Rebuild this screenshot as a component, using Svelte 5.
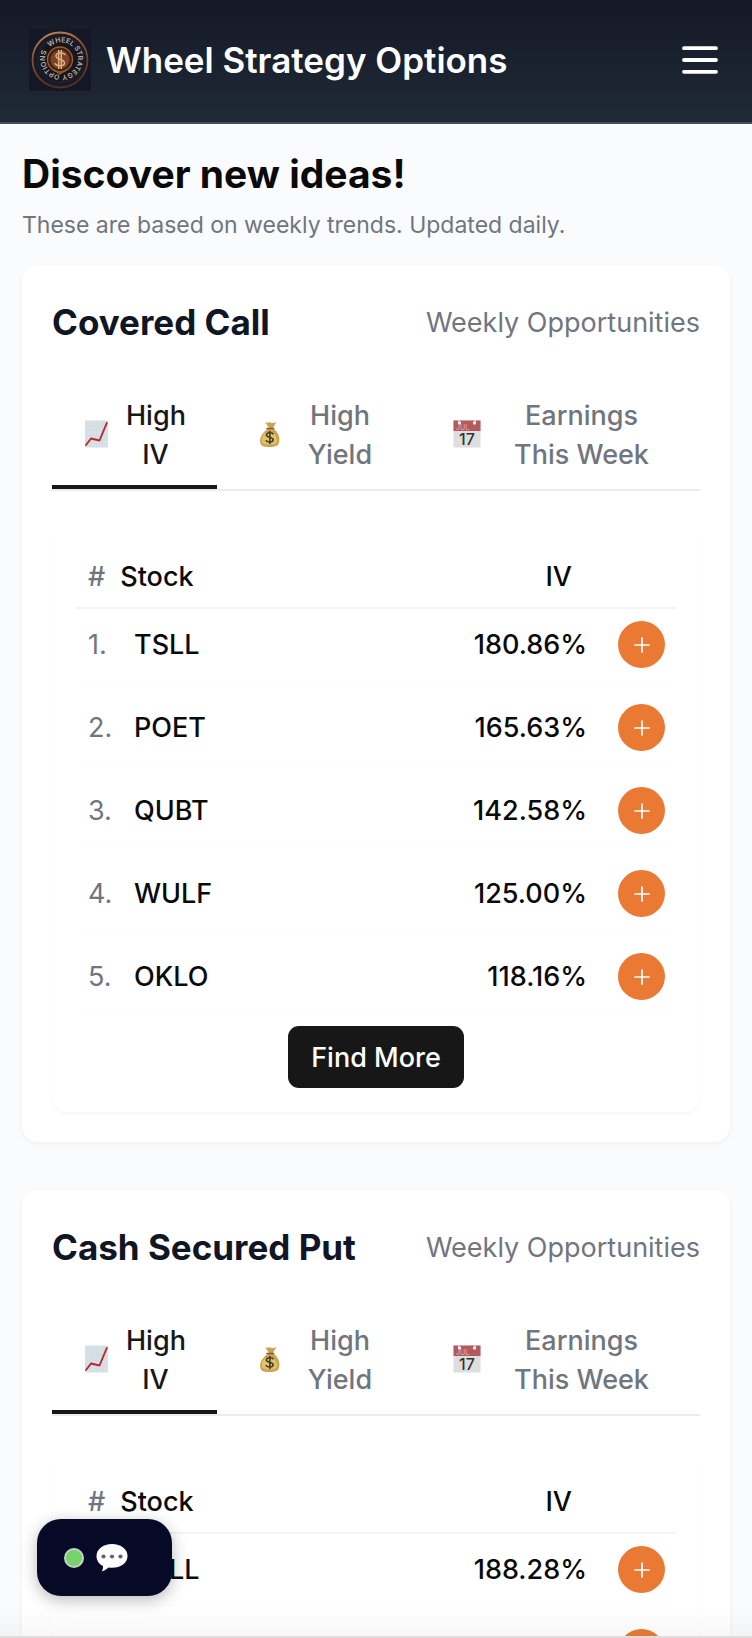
<script>
  const tabs = [
    { icon: 'chart', label: 'High IV' },
    { icon: 'bag', label: 'High Yield' },
    { icon: 'calendar', label: 'Earnings This Week' }
  ];

  const sections = [
    {
      title: 'Covered Call',
      rows: [
        ['TSLL', '180.86%'],
        ['POET', '165.63%'],
        ['QUBT', '142.58%'],
        ['WULF', '125.00%'],
        ['OKLO', '118.16%']
      ]
    },
    {
      title: 'Cash Secured Put',
      rows: [
        ['TSLL', '188.28%'],
        ['POET', '165.63%']
      ]
    }
  ];

  let active = $state([0, 0]);
</script>

<div class="page">
  <header class="topbar">
    <a class="brand" href="#home">
      <svg class="logo" viewBox="0 0 62 62" aria-hidden="true">
        <defs>
          <linearGradient id="copper" x1="0" y1="0" x2="0.3" y2="1">
            <stop offset="0" stop-color="#c98a58" />
            <stop offset="0.5" stop-color="#8a4a28" />
            <stop offset="1" stop-color="#5a2f20" />
          </linearGradient>
          <path id="ring" d="M20.900 18.080A16.400 16.400 0 1 1 20.890 18.090" />
        </defs>
        <rect width="62" height="62" fill="#131726" />
        <circle cx="31" cy="31" r="27.5" fill="#171a28" stroke="url(#copper)" stroke-width="1.8" />
        <circle cx="31" cy="31" r="22" fill="#15161e" stroke="#2c2c34" stroke-width="0.6" />
        <text class="ring-text"><textPath href="#ring">WHEEL STRATEGY OPTIONS</textPath></text>
        <circle cx="31" cy="30.5" r="12.5" fill="#3a211b" stroke="#a15a32" stroke-width="1.4" />
        <circle cx="31" cy="30.5" r="9.6" fill="#7e4225" />
        <path d="M36 25.5c-1.500-2-8.500-2.500-9 1.200-.4 4 8.500 3 8.500 7.200 0 3.600-7.500 3.600-9.500.8M29.700 21.500v18M32.300 21.500v18" fill="none" stroke="#dfb183" stroke-width="1.5" stroke-linecap="round" />
        <path d="M24.500 40.500l6.500 4.500 6.500-4.500" fill="none" stroke="#a15a32" stroke-width="1.200" />
      </svg>
      <span>Wheel Strategy Options</span>
    </a>
    <button class="menu" aria-label="Menu">
      <svg viewBox="0 0 36 28" aria-hidden="true">
        <path d="M2 2.200h32M2 14h32M2 25.800h32" stroke="#fff" stroke-width="3.800" stroke-linecap="round" />
      </svg>
    </button>
  </header>

  <main>
    <h1>Discover new ideas!</h1>
    <p class="lead">These are based on weekly trends. Updated daily.</p>

    {#each sections as section, s}
      <section class="card">
        <div class="card-head">
          <h2>{section.title}</h2>
          <span>Weekly Opportunities</span>
        </div>

        <div class="tabs" role="tablist">
          {#each tabs as tab, t}
            <button
              role="tab"
              class="tab"
              class:active={active[s] === t}
              aria-selected={active[s] === t}
              onclick={() => (active[s] = t)}
            >
              {#if tab.icon === 'chart'}
                <svg viewBox="0 1 28 28" aria-hidden="true">
                  <rect x="1" y="0.500" width="23" height="27" fill="#d7e0e6" />
                  <path d="M1 5.500h23M1 10.500h23M1 15.500h23M1 20.500h23M6.500 .5v27M12.500 .5v27M18.500 .5v27" stroke="#ced8de" stroke-width="0.600" />
                  <path d="M2 25l5-6.500 8.500 2L22.800 3" fill="none" stroke="#b8282d" stroke-width="1.900" stroke-linejoin="round" stroke-linecap="round" />
                </svg>
              {:else if tab.icon === 'bag'}
                <svg viewBox="-1 1 28 28" aria-hidden="true">
                  <path d="M15 7.500l-4-6c2 1.200 3 .8 4.500.3 2.500 1 4 1 6.800-.5l-3.300 6.200c5 4 7.500 9 6 14.500-.6 3-3 4.500-9.500 4.500S7 25.500 6.300 22C5 16.500 9.500 11 15 7.500z" transform="translate(4 .5)" fill="#c9a452" />
                  <path d="M15 13c-3 3-4 7-2.500 10 4 2.500 11 2 14 0 1-4-.5-8-4-11z" fill="#e2c26e" />
                  <path d="M17 8.500h6.500" stroke="#80602b" stroke-width="1.700" stroke-linecap="round" />
                  <path d="M23 13.800c-1-1.500-6.500-1.800-6.600 1.200-.1 2.800 6.800 1.900 6.800 4.800 0 2.800-6 2.700-7 .8M19.900 11.500v12" fill="none" stroke="#433d27" stroke-width="1.600" stroke-linecap="round" />
                </svg>
              {:else}
                <svg viewBox="0 1 28 28" aria-hidden="true">
                  <rect x="0.500" y="0.500" width="27" height="27" fill="#dedede" />
                  <rect x="0.500" y="0.500" width="27" height="10.500" fill="#b25a5e" />
                  <circle cx="6.500" cy="3" r="1.700" fill="#eee" />
                  <circle cx="21.500" cy="3" r="1.700" fill="#eee" />
                  <path d="M6 .5v2M22 .5v2" stroke="#eee" stroke-width="1.200" />
                  <text class="cal-month" x="3" y="10">JUL</text>
                  <text class="cal-day" x="14" y="25" text-anchor="middle">17</text>
                </svg>
              {/if}
              <span>{tab.label}</span>
            </button>
          {/each}
        </div>

        <div class="panel">
          <table>
            <thead>
              <tr>
                <th class="hash">#</th>
                <th class="stock">Stock</th>
                <th class="iv">IV</th>
              </tr>
            </thead>
            <tbody>
              {#each section.rows as [name, iv], i}
                <tr>
                  <td class="num">{i + 1}.</td>
                  <td class="stock">{name}</td>
                  <td>{iv}</td>
                  <td class="action">
                    <button class="add" aria-label={`Add ${name}`}>
                      <svg viewBox="0 0 16 16" aria-hidden="true">
                        <path d="M8 1v14M1 8h14" stroke="#fff" stroke-width="1.700" stroke-linecap="round" />
                      </svg>
                    </button>
                  </td>
                </tr>
              {/each}
            </tbody>
          </table>
          <button class="more">Find More</button>
        </div>
      </section>
    {/each}
  </main>

  <button class="chat" aria-label="Open chat">
    <span class="status"></span>
    <svg viewBox="0 0 34 30" aria-hidden="true">
      <path d="M17 1C8 1 1.500 6 1.500 13c0 4.500 2.500 8 6.500 10 .3 2-.5 4-1.200 5.200 2.700-.4 5.200-2 6.500-3.700 1.200.2 2.500.3 3.700.3 9 0 15.500-5 15.500-11.800S26 1 17 1z" fill="#fff" />
      <g fill="#63636b">
        <circle cx="8.500" cy="13.500" r="2.100" />
        <circle cx="17" cy="13.500" r="2.100" />
        <circle cx="25.500" cy="13.500" r="2.100" />
      </g>
    </svg>
  </button>
  <div class="edge"></div>
</div>

<style>
  :global(body) {
    background: #fafbfd;
  }

  .page {
    height: 100vh;
    overflow: hidden;
    position: relative;
    background: #fafbfd;
    color: #0a0a0a;
    font-family: Inter, sans-serif;
    font-size: 27px;
    line-height: 39px;
  }

  button {
    font: inherit;
    color: inherit;
    border: 0;
    background: none;
    padding: 0;
    cursor: pointer;
  }

  svg {
    display: block;
    flex: none;
  }

  .topbar {
    display: flex;
    align-items: center;
    justify-content: space-between;
    box-sizing: border-box;
    height: 124px;
    padding: 0 34px 2px 29px;
    background: linear-gradient(#141927, #202936);
    border-bottom: 2px solid #4a4b57;
  }

  .brand {
    display: flex;
    align-items: center;
    gap: 15px;
    color: #fff;
    text-decoration: none;
    font-size: 35px;
    font-weight: 600;
  }

  .logo {
    width: 62px;
    height: 62px;
  }

  .ring-text {
    font-size: 7px;
    font-weight: 600;
    fill: #b9b2a6;
  }

  .menu svg {
    width: 36px;
    height: 28px;
  }

  main {
    padding: 26px 22px 0;
  }

  h1,
  h2,
  p {
    margin: 0;
  }

  h1 {
    font-size: 39px;
    line-height: 48px;
    font-weight: 700;
  }

  .lead {
    margin: 10px 0 23px;
    font-size: 23px;
    line-height: 34px;
    color: #71757e;
  }

  .card {
    padding: 29px 30px 30px;
    margin-bottom: 48px;
    border-radius: 16px;
    background: #fff;
    box-shadow: 0 2px 5px rgba(20, 30, 50, 0.05);
  }

  .card-head {
    display: flex;
    align-items: center;
    justify-content: space-between;
    color: #71757e;
  }

  h2 {
    font-size: 35px;
    line-height: 56px;
    font-weight: 700;
    color: #101624;
  }

  .tabs {
    display: grid;
    grid-template-columns: 165fr 204fr 279fr;
    margin: 34px 0 31px;
    border-bottom: 2px solid #ececee;
  }

  .tab {
    display: flex;
    align-items: center;
    gap: 14px;
    min-width: 0;
    padding: 12px 32px 11px;
    border-bottom: 4px solid transparent;
    color: #71757e;
    font-weight: 500;
  }

  .tab span {
    flex: 1;
    min-width: 0;
  }

  .tab svg {
    width: 28px;
    height: 28px;
    overflow: visible;
  }

  .tab.active {
    color: #171717;
    border-bottom-color: #171717;
  }

  .cal-month {
    font-size: 7px;
    fill: #dba6a8;
  }

  .cal-day {
    font-size: 16px;
    font-weight: 500;
    fill: #333;
  }

  .panel {
    padding: 24px;
    border-radius: 16px;
    box-shadow: 0 3px 3px rgba(20, 30, 50, 0.03);
    text-align: center;
  }

  table {
    display: block;
    font-weight: 500;
    text-align: left;
  }

  thead,
  tbody {
    display: block;
  }

  tr {
    display: flex;
    align-items: center;
  }

  th,
  td {
    padding: 0;
    font-weight: 500;
  }

  thead tr {
    padding: 11px 12px;
    border-bottom: 2px solid #f3f4f5;
  }

  .hash {
    padding-right: 15px;
    color: #71757e;
  }

  .iv {
    padding-right: 92px;
  }

  .stock {
    flex: 1;
  }

  tbody {
    padding: 0 4px;
  }

  tbody tr {
    padding: 12px 7px 12px 8px;
    border-bottom: 1px solid #fbfbfb;
  }

  tbody tr + tr {
    margin-top: 11px;
  }

  .num {
    width: 46px;
    color: #71757e;
    font-weight: 400;
  }

  .action {
    padding-left: 31px;
  }

  .add {
    display: flex;
    align-items: center;
    justify-content: center;
    width: 47px;
    height: 47px;
    border-radius: 50%;
    background: #ea7a33;
  }

  .add svg {
    width: 16px;
    height: 16px;
  }

  .more {
    margin-top: 13px;
    padding: 12px 23px 11px;
    border-radius: 11px;
    background: #171717;
    color: #fff;
    font-weight: 500;
  }

  .chat {
    position: fixed;
    left: 37px;
    bottom: 42px;
    display: flex;
    align-items: center;
    gap: 11px;
    box-sizing: border-box;
    width: 135px;
    height: 77px;
    padding-left: 27px;
    border-radius: 24px;
    background: #060a27;
    box-shadow: 0 4px 16px rgba(0, 0, 0, 0.28);
  }

  .status {
    box-sizing: border-box;
    width: 20px;
    height: 20px;
    border: 2px solid #c3d3c4;
    border-radius: 50%;
    background: #77d16c;
  }

  .chat svg {
    width: 34px;
    height: 30px;
  }

  .edge {
    position: fixed;
    inset: auto 0 0;
    height: 32px;
    box-sizing: border-box;
    border-bottom: 2px solid #e1dddd;
    background: linear-gradient(transparent, rgba(30, 30, 40, 0.03));
    pointer-events: none;
  }
</style>
